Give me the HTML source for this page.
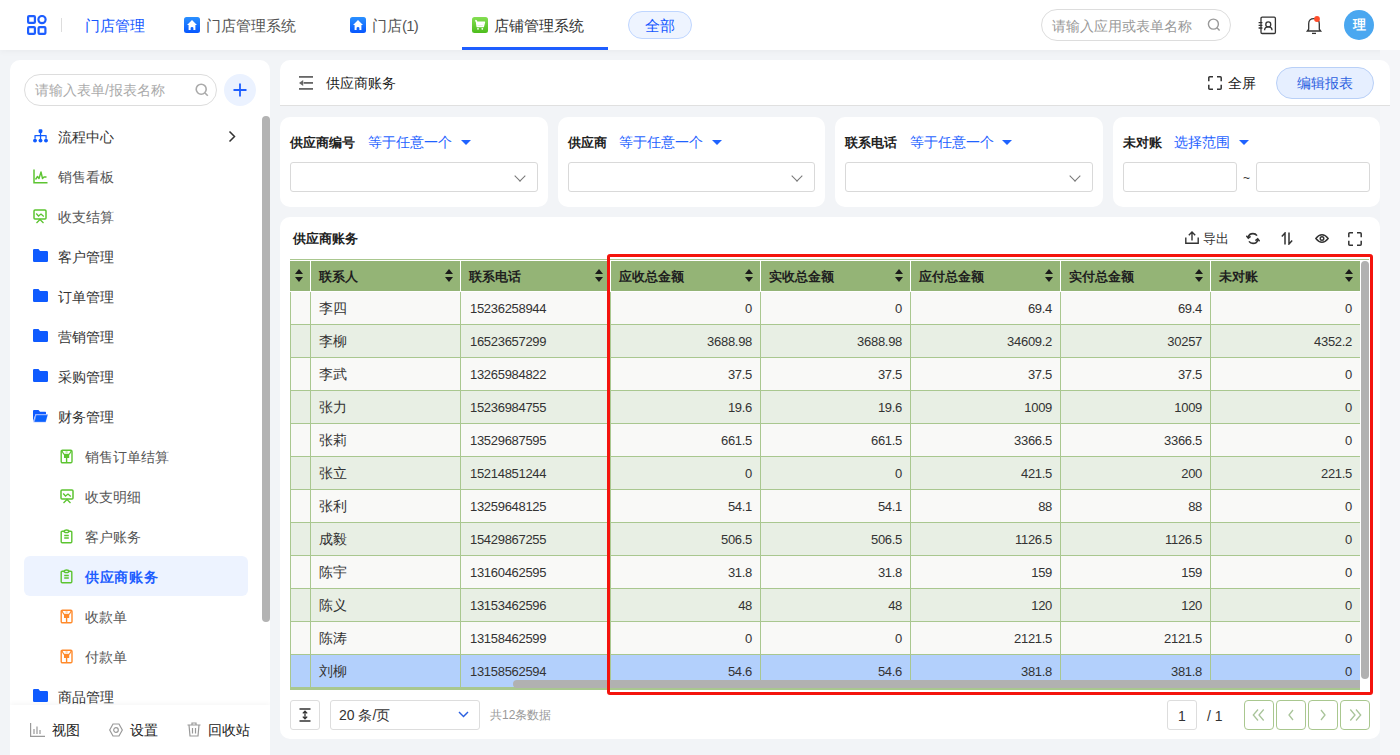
<!DOCTYPE html>
<html><head><meta charset="utf-8">
<style>
*{box-sizing:border-box;margin:0;padding:0}
html,body{width:1400px;height:755px;overflow:hidden}
body{font-family:"Liberation Sans",sans-serif;background:#f2f4f7;position:relative;color:#333}
.abs{position:absolute}
.topbar{left:0;top:0;width:1400px;height:50px;background:#fff;box-shadow:0 2px 6px rgba(0,0,0,.035)}
.tb-txt{position:absolute;font-size:15px;line-height:20px;top:16px;color:#555;white-space:nowrap}
.side{left:10px;top:60px;width:260px;height:720px;background:#fff;border-radius:10px;overflow:hidden}
.mi{position:absolute;left:0;width:260px;height:40px;font-size:14px;line-height:40px;color:#333}
.mi .t{position:absolute;left:48px;top:0}
.mi .ic{position:absolute;left:23px;top:13px;width:15px;height:14px}
.sub .t{left:75px;color:#555}
.sub .ic{left:50px}
.card{background:#fff;border-radius:10px;position:absolute}
.flabel{position:absolute;top:18px;font-size:13px;font-weight:bold;color:#222;line-height:16px;white-space:nowrap}
.fop{position:absolute;top:16px;font-size:14px;color:#1f63ff;line-height:18px;white-space:nowrap}
.tri{position:absolute;top:23px;width:0;height:0;border-left:5px solid transparent;border-right:5px solid transparent;border-top:5px solid #1f63ff}
.sel{position:absolute;top:45px;height:30px;border:1px solid #d9d9d9;border-radius:3px;background:#fff}
.th{font-size:13px;font-weight:bold;line-height:18px;color:#1f1f1f;white-space:nowrap}
.td{font-size:14px;line-height:18px;color:#333;white-space:nowrap}
.num{font-size:13px;letter-spacing:-0.3px}
.pg{width:30px;height:30px;border:1.3px solid #a9c78f;border-radius:4px;display:flex;align-items:center;justify-content:center}
.chev{position:absolute;right:13px;top:9px;width:8px;height:8px;border-right:1.3px solid #777;border-bottom:1.3px solid #777;transform:rotate(45deg)}
</style></head><body>

<!-- TOP BAR -->
<div class="abs topbar">
  <svg class="abs" style="left:27px;top:15px" width="20" height="20" viewBox="0 0 20 20" fill="none" stroke="#1e5eff" stroke-width="2.2">
    <rect x="1.1" y="1.1" width="6.8" height="6.8" rx="1"/><circle cx="15" cy="4.6" r="3.6"/>
    <rect x="1.1" y="12.1" width="6.8" height="6.8" rx="1"/><rect x="11.6" y="12.1" width="6.8" height="6.8" rx="1"/>
  </svg>
  <div class="abs" style="left:61px;top:18px;width:1px;height:14px;background:#ddd"></div>
  <div class="tb-txt" style="left:85px;color:#1458ff">门店管理</div>
  <svg class="abs" style="left:184px;top:17px" width="16" height="16" viewBox="0 0 16 16"><defs><linearGradient id="hb184" x1="0" y1="0" x2="0" y2="1"><stop offset="0" stop-color="#2a90ff"/><stop offset="1" stop-color="#0757ff"/></linearGradient></defs><rect width="16" height="16" rx="2.5" fill="url(#hb184)"/><path d="M8 2.9L13 8.1H11.4V13.1H9.4V10.9Q9.4 10 8 10Q6.6 10 6.6 10.9V13.1H4.6V8.1H3Z" fill="#fff"/></svg>
  <div class="tb-txt" style="left:206px">门店管理系统</div>
  <svg class="abs" style="left:350px;top:17px" width="16" height="16" viewBox="0 0 16 16"><defs><linearGradient id="hb350" x1="0" y1="0" x2="0" y2="1"><stop offset="0" stop-color="#2a90ff"/><stop offset="1" stop-color="#0757ff"/></linearGradient></defs><rect width="16" height="16" rx="2.5" fill="url(#hb350)"/><path d="M8 2.9L13 8.1H11.4V13.1H9.4V10.9Q9.4 10 8 10Q6.6 10 6.6 10.9V13.1H4.6V8.1H3Z" fill="#fff"/></svg>
  <div class="tb-txt" style="left:372px">门店<span style="letter-spacing:-0.8px">(1)</span></div>
  <svg class="abs" style="left:472px;top:17px" width="16" height="16" viewBox="0 0 16 16"><defs><linearGradient id="gb" x1="0" y1="0" x2="0" y2="1"><stop offset="0" stop-color="#84de52"/><stop offset="1" stop-color="#4dbd1c"/></linearGradient></defs><rect width="16" height="16" rx="2.5" fill="url(#gb)"/><path d="M3.2 3.5L4.4 4L5.2 9.6H11.3L12.4 5.2H4.8" fill="none" stroke="#fff" stroke-width="1.5" stroke-linejoin="round"/><path d="M4.6 5H12.2L11.2 8.8H5.3Z" fill="#fff"/><circle cx="6" cy="11.8" r="0.9" fill="#fff"/><circle cx="10.3" cy="11.8" r="0.9" fill="#fff"/></svg>
  <div class="tb-txt" style="left:494px;color:#333">店铺管理系统</div>
  <div class="abs" style="left:462px;top:47px;width:146px;height:3px;background:#1e5eff"></div>
  <div class="abs" style="left:628px;top:11px;width:64px;height:28px;border-radius:14px;background:#eef4ff;border:1px solid #bfd6ff;color:#1458ff;font-size:15px;line-height:28px;text-align:center">全部</div>

  <div class="abs" style="left:1041px;top:9px;width:190px;height:32px;border-radius:16px;border:1px solid #ddd;background:#fff"></div>
  <div class="tb-txt" style="left:1052px;font-size:14px;color:#999">请输入应用或表单名称</div>
  <svg class="abs" style="left:1207px;top:18px" width="14" height="14" viewBox="0 0 14 14" fill="none" stroke="#999" stroke-width="1.4"><circle cx="6.4" cy="6.1" r="5"/><path d="M10 9.8L12.6 12.4"/></svg>
  <svg class="abs" style="left:1258px;top:16px" width="20" height="19" viewBox="0 0 20 19" fill="none" stroke="#333" stroke-width="1.3"><rect x="3" y="1.2" width="14.4" height="16.3" rx="1.2"/><path d="M0.6 6.6H4.4M0.6 9.3H4.4M0.6 12H4.4"/><circle cx="10.3" cy="8.4" r="2.5"/><path d="M6.6 14.2Q6.6 10.9 10.3 10.9Q14 10.9 14 14.2"/></svg>
  <svg class="abs" style="left:1305px;top:15px" width="20" height="20" viewBox="0 0 20 20" fill="none" stroke="#333" stroke-width="1.3"><path d="M2.3 16H15.7L14.3 14.2V8.8Q14.3 3.6 9 3.6Q3.7 3.6 3.7 8.8V14.2Z"/><path d="M7 18.4H11"/><circle cx="12" cy="4" r="2.9" fill="#ff4d2a" stroke="none"/></svg>
  <div class="abs" style="left:1344px;top:10px;width:30px;height:30px;border-radius:50%;background:#4aa7f0;color:#fff;font-size:13px;line-height:30px;text-align:center;font-weight:bold">理</div>
</div>

<!-- SIDEBAR -->
<div class="abs side">
  <div class="abs" style="left:14px;top:14px;width:193px;height:32px;border-radius:16px;border:1px solid #ddd"></div>
  <div class="abs" style="left:25px;top:21px;font-size:14px;line-height:18px;color:#aaa">请输入表单/报表名称</div>
  <svg class="abs" style="left:185px;top:23px" width="14" height="14" viewBox="0 0 14 14" fill="none" stroke="#aaa" stroke-width="1.6"><circle cx="6.2" cy="6.2" r="5"/><path d="M10 10L12.8 12.8"/></svg>
  <div class="abs" style="left:214px;top:14px;width:32px;height:32px;border-radius:50%;background:#ebf2ff"></div>
  <svg class="abs" style="left:222px;top:22px" width="16" height="16" viewBox="0 0 16 16" stroke="#1e5eff" stroke-width="1.8"><path d="M8 1.5V14.5M1.5 8H14.5"/></svg>
  <!--MENU-->
<div class="mi" style="top:57px"><svg class="abs" style="left:23px;top:12px" width="15" height="15" viewBox="0 0 15 15" fill="#0f5bff"><rect x="5.6" y="0.3" width="3.8" height="3.6" rx="1.2"/><rect x="6.9" y="3" width="1.3" height="7"/><rect x="2" y="5.9" width="11" height="1.4" rx="0.6"/><rect x="1.4" y="6.2" width="1.3" height="3.5"/><rect x="12.4" y="6.2" width="1.3" height="3.5"/><circle cx="2" cy="11.6" r="1.95"/><circle cx="7.5" cy="11.6" r="1.95"/><circle cx="13" cy="11.6" r="1.95"/></svg><div class="t" style="left:48px;color:#333">流程中心</div></div>
<svg class="abs" style="left:218px;top:70px" width="8" height="13" viewBox="0 0 8 13" fill="none" stroke="#333" stroke-width="1.5"><path d="M1.5 1.5L6.5 6.5L1.5 11.5"/></svg>
<div class="mi" style="top:97px"><svg class="abs" style="left:23px;top:12px" width="15" height="15" viewBox="0 0 15 15" fill="none" stroke="#5cc431" stroke-width="1.5"><path d="M1 0.5V13.8H14.5"/><path d="M2.5 10.5L4.5 7.5L6 9.5L8 3L9.5 9.5L11 8H13.5" stroke-width="1.4" stroke-linejoin="round"/></svg><div class="t" style="left:48px;color:#555">销售看板</div></div>
<div class="mi" style="top:137px"><svg class="abs" style="left:23px;top:12px" width="14" height="15" viewBox="0 0 14 15" fill="none" stroke="#5cc431" stroke-width="1.5"><rect x="1" y="1" width="12" height="9" rx="1"/><path d="M3.2 4.5L5.5 7L8 5L10.8 7.5" stroke-width="1.3"/><path d="M3.5 14L7 10.5L10.5 14" stroke-width="1.3"/></svg><div class="t" style="left:48px;color:#555">收支结算</div></div>
<div class="mi" style="top:177px"><svg class="abs" style="left:23px;top:12px" width="15" height="13" viewBox="0 0 15 13"><path d="M0 1.2Q0 0 1.2 0H5.5L7 2H13.8Q15 2 15 3.2V11.8Q15 13 13.8 13H1.2Q0 13 0 11.8Z" fill="#0f5bff"/></svg><div class="t" style="left:48px;color:#333">客户管理</div></div>
<div class="mi" style="top:217px"><svg class="abs" style="left:23px;top:12px" width="15" height="13" viewBox="0 0 15 13"><path d="M0 1.2Q0 0 1.2 0H5.5L7 2H13.8Q15 2 15 3.2V11.8Q15 13 13.8 13H1.2Q0 13 0 11.8Z" fill="#0f5bff"/></svg><div class="t" style="left:48px;color:#333">订单管理</div></div>
<div class="mi" style="top:257px"><svg class="abs" style="left:23px;top:12px" width="15" height="13" viewBox="0 0 15 13"><path d="M0 1.2Q0 0 1.2 0H5.5L7 2H13.8Q15 2 15 3.2V11.8Q15 13 13.8 13H1.2Q0 13 0 11.8Z" fill="#0f5bff"/></svg><div class="t" style="left:48px;color:#333">营销管理</div></div>
<div class="mi" style="top:297px"><svg class="abs" style="left:23px;top:12px" width="15" height="13" viewBox="0 0 15 13"><path d="M0 1.2Q0 0 1.2 0H5.5L7 2H13.8Q15 2 15 3.2V11.8Q15 13 13.8 13H1.2Q0 13 0 11.8Z" fill="#0f5bff"/></svg><div class="t" style="left:48px;color:#333">采购管理</div></div>
<div class="mi" style="top:337px"><svg class="abs" style="left:23px;top:13px" width="15" height="13" viewBox="0 0 15 13"><path d="M0 1Q0 0 1 0H5.5L7 1.8H12.3Q13 1.8 13 2.5V4.2H2.4L0 11.5Z" fill="#0f5bff"/><path d="M2.6 4.3H15L12.8 12.3H0.4Z" fill="#8aa8ff"/><path d="M3.4 5.2H14.4L12.5 11.8H1.7Z" fill="#0a62ff"/></svg><div class="t" style="left:48px;color:#333">财务管理</div></div>
<div class="mi" style="top:377px"><svg class="abs" style="left:50px;top:12px" width="13" height="15" viewBox="0 0 13 15"><rect x="1.2" y="1.2" width="10.8" height="12.6" rx="1.2" fill="none" stroke="#5cc431" stroke-width="1.4"/><path d="M1.8 1.8L4 5.5M11.4 1.8L9.2 5.5" stroke="#5cc431" stroke-width="1.2"/><rect x="4" y="4.8" width="5.2" height="4.2" fill="#5cc431"/><rect x="5.9" y="8.5" width="1.4" height="5" fill="#5cc431"/><rect x="5.4" y="2.6" width="2.4" height="0.9" rx="0.4" fill="#5cc431" opacity=".7"/></svg><div class="t" style="left:75px;color:#555">销售订单结算</div></div>
<div class="mi" style="top:417px"><svg class="abs" style="left:50px;top:12px" width="14" height="15" viewBox="0 0 14 15" fill="none" stroke="#5cc431" stroke-width="1.5"><rect x="1" y="1" width="12" height="9" rx="1"/><path d="M3.2 4.5L5.5 7L8 5L10.8 7.5" stroke-width="1.3"/><path d="M3.5 14L7 10.5L10.5 14" stroke-width="1.3"/></svg><div class="t" style="left:75px;color:#555">收支明细</div></div>
<div class="mi" style="top:457px"><svg class="abs" style="left:50px;top:12px" width="13" height="15" viewBox="0 0 13 15" fill="none" stroke="#5cc431" stroke-width="1.4"><path d="M4 2.3H2.2Q1.2 2.3 1.2 3.3V12.8Q1.2 13.8 2.2 13.8H10.8Q11.8 13.8 11.8 12.8V3.3Q11.8 2.3 10.8 2.3H9"/><ellipse cx="6.5" cy="2.3" rx="2.4" ry="1.3"/><path d="M4.2 6.5H8.8M4.2 9H8.8" stroke-width="1.3"/></svg><div class="t" style="left:75px;color:#555">客户账务</div></div>
<div class="abs" style="left:14px;top:496px;width:224px;height:40px;border-radius:6px;background:#edf3ff"></div>
<div class="mi" style="top:497px"><svg class="abs" style="left:50px;top:12px" width="13" height="15" viewBox="0 0 13 15" fill="none" stroke="#5cc431" stroke-width="1.4"><path d="M4 2.3H2.2Q1.2 2.3 1.2 3.3V12.8Q1.2 13.8 2.2 13.8H10.8Q11.8 13.8 11.8 12.8V3.3Q11.8 2.3 10.8 2.3H9"/><ellipse cx="6.5" cy="2.3" rx="2.4" ry="1.3"/><path d="M4.2 6.5H8.8M4.2 9H8.8" stroke-width="1.3"/></svg><div class="t" style="left:75px;color:#1e5eff;font-weight:bold;letter-spacing:0.7px">供应商账务</div></div>
<div class="mi" style="top:537px"><svg class="abs" style="left:50px;top:12px" width="13" height="15" viewBox="0 0 13 15"><rect x="1.2" y="1.2" width="10.8" height="12.6" rx="1.2" fill="none" stroke="#ff8a2b" stroke-width="1.4"/><path d="M1.8 1.8L4 5.5M11.4 1.8L9.2 5.5" stroke="#ff8a2b" stroke-width="1.2"/><rect x="4" y="4.8" width="5.2" height="4.2" fill="#ff8a2b"/><rect x="5.9" y="8.5" width="1.4" height="5" fill="#ff8a2b"/><rect x="5.4" y="2.6" width="2.4" height="0.9" rx="0.4" fill="#ff8a2b" opacity=".7"/></svg><div class="t" style="left:75px;color:#555">收款单</div></div>
<div class="mi" style="top:577px"><svg class="abs" style="left:50px;top:12px" width="13" height="15" viewBox="0 0 13 15"><rect x="1.2" y="1.2" width="10.8" height="12.6" rx="1.2" fill="none" stroke="#ff8a2b" stroke-width="1.4"/><path d="M1.8 1.8L4 5.5M11.4 1.8L9.2 5.5" stroke="#ff8a2b" stroke-width="1.2"/><rect x="4" y="4.8" width="5.2" height="4.2" fill="#ff8a2b"/><rect x="5.9" y="8.5" width="1.4" height="5" fill="#ff8a2b"/><rect x="5.4" y="2.6" width="2.4" height="0.9" rx="0.4" fill="#ff8a2b" opacity=".7"/></svg><div class="t" style="left:75px;color:#555">付款单</div></div>
<div class="mi" style="top:617px"><svg class="abs" style="left:23px;top:12px" width="15" height="13" viewBox="0 0 15 13"><path d="M0 1.2Q0 0 1.2 0H5.5L7 2H13.8Q15 2 15 3.2V11.8Q15 13 13.8 13H1.2Q0 13 0 11.8Z" fill="#0f5bff"/></svg><div class="t" style="left:48px;color:#333">商品管理</div></div>
<!--/MENU-->
  <div class="abs" style="left:252px;top:56px;width:8px;height:506px;border-radius:4px;background:#b3b3b3"></div>
  
  <div class="abs" style="left:0;top:645px;width:260px;height:80px;background:#fff;box-shadow:0 -2px 5px rgba(0,0,0,.035)"></div>
  <!--BOTTOM-->
<svg class="abs" style="left:20px;top:663px" width="15" height="14" viewBox="0 0 15 14" fill="none" stroke="#999" stroke-width="1.2"><path d="M0.6 0V13.4H15M4 11V6M7 11V3.5M10 11V7"/></svg>
<div class="abs" style="left:42px;top:661px;font-size:14px;line-height:18px;color:#222">视图</div>
<svg class="abs" style="left:99px;top:663px" width="14" height="14" viewBox="0 0 14 14" fill="none" stroke="#999" stroke-width="1.2"><path d="M4 1H10L13.3 7L10 13H4L0.7 7Z"/><circle cx="7" cy="7" r="2.3"/></svg>
<div class="abs" style="left:120px;top:661px;font-size:14px;line-height:18px;color:#222">设置</div>
<svg class="abs" style="left:177px;top:662px" width="14" height="15" viewBox="0 0 14 15" fill="none" stroke="#999" stroke-width="1.2"><path d="M0.5 3H13.5M5 3V1H9V3M2 3L3 14H11L12 3M5.5 6V11.5M8.5 6V11.5"/></svg>
<div class="abs" style="left:198px;top:661px;font-size:14px;line-height:18px;color:#222">回收站</div>
<!--/BOTTOM-->
</div>

<!-- MAIN HEADER -->
<div class="abs" style="left:1380px;top:50px;width:20px;height:705px;background:#f5f6f9"></div>
<div class="abs" style="left:280px;top:60px;width:1110px;height:46px;background:#fff;border-radius:10px 10px 0 0;border-bottom:1px solid #e0e0e0"></div>
<div class="abs" style="left:326px;top:74px;font-size:14px;line-height:18px;color:#222">供应商账务</div>
<svg class="abs" style="left:299px;top:76px" width="14" height="14" viewBox="0 0 14 14" fill="#666"><rect x="0" y="0" width="14" height="1.8"/><rect x="4.6" y="6" width="9.4" height="1.8"/><path d="M0 6.9L4.2 3.9V9.9Z"/><rect x="0" y="12" width="14" height="1.8"/></svg>
<svg class="abs" style="left:1208px;top:76px" width="14" height="14" viewBox="0 0 14 14" fill="none" stroke="#333" stroke-width="1.5"><path d="M0.8 5.3V1.8Q0.8 0.8 1.8 0.8H5M9 0.8H12.2Q13.2 0.8 13.2 1.8V5.3M13.2 8.7V12.2Q13.2 13.2 12.2 13.2H9M5 13.2H1.8Q0.8 13.2 0.8 12.2V8.7"/></svg>
<div class="abs" style="left:1228px;top:74px;font-size:14px;line-height:18px;color:#222">全屏</div>
<div class="abs" style="left:1276px;top:67px;width:98px;height:32px;border-radius:16px;background:#e6efff;border:1px solid #b9d0f7;color:#2b60e0;font-size:14px;line-height:30px;text-align:center">编辑报表</div>

<!-- FILTERS -->
<div class="card" style="left:280px;top:117px;width:268px;height:90px">
  <div class="flabel" style="left:10px">供应商编号</div>
  <div class="fop" style="left:88px">等于任意一个</div>
  <div class="tri" style="left:181px"></div>
  <div class="sel" style="left:10px;width:248px"><div class="chev"></div></div>
</div>
<div class="card" style="left:558px;top:117px;width:267px;height:90px">
  <div class="flabel" style="left:10px">供应商</div>
  <div class="fop" style="left:61px">等于任意一个</div>
  <div class="tri" style="left:154px"></div>
  <div class="sel" style="left:10px;width:247px"><div class="chev"></div></div>
</div>
<div class="card" style="left:835px;top:117px;width:268px;height:90px">
  <div class="flabel" style="left:10px">联系电话</div>
  <div class="fop" style="left:75px">等于任意一个</div>
  <div class="tri" style="left:167px"></div>
  <div class="sel" style="left:10px;width:248px"><div class="chev"></div></div>
</div>
<div class="card" style="left:1113px;top:117px;width:267px;height:90px">
  <div class="flabel" style="left:10px">未对账</div>
  <div class="fop" style="left:61px">选择范围</div>
  <div class="tri" style="left:126px"></div>
  <div class="sel" style="left:10px;width:114px"></div>
  <div class="abs" style="left:130px;top:54px;font-size:12px;color:#333">~</div>
  <div class="sel" style="left:143px;width:114px"></div>
</div>

<!-- TABLE CARD -->
<div class="card" style="left:280px;top:217px;width:1100px;height:522px">
  <div class="abs" style="left:13px;top:13px;font-size:13px;font-weight:bold;line-height:17px;color:#222">供应商账务</div>
  <svg class="abs" style="left:905px;top:14px" width="14" height="13" viewBox="0 0 14 13" fill="none" stroke="#333" stroke-width="1.4"><path d="M0.8 6.5V12.2H13.2V6.5"/><path d="M7 9.5V1.2M3.8 4.2L7 1L10.2 4.2"/></svg>
  <div class="abs" style="left:923px;top:13px;font-size:13px;line-height:17px;color:#333">导出</div>
  <svg class="abs" style="left:966px;top:15px" width="14" height="13" viewBox="0 0 14 13" fill="none" stroke="#333" stroke-width="1.6"><path d="M2.2 5.2Q3 1.6 7 1.6Q9.6 1.6 11 3.6"/><path d="M11.8 7.8Q11 11.4 7 11.4Q4.4 11.4 3 9.4"/><path d="M0.4 3.8L2.3 6.2L4.6 4.4" stroke-width="1.5"/><path d="M13.6 9.2L11.7 6.8L9.4 8.6" stroke-width="1.5"/></svg>
  <svg class="abs" style="left:1001px;top:15px" width="12" height="13" viewBox="0 0 12 13" fill="none" stroke="#333" stroke-width="1.5"><path d="M4 12.5V1L0.8 4.4"/><path d="M8 0.5V12L11.2 8.6"/></svg>
  <svg class="abs" style="left:1035px;top:17px" width="14" height="9" viewBox="0 0 14 9" fill="none" stroke="#333" stroke-width="1.4"><path d="M0.8 4.5Q3.8 0.8 7 0.8Q10.2 0.8 13.2 4.5Q10.2 8.2 7 8.2Q3.8 8.2 0.8 4.5Z"/><circle cx="7" cy="4.5" r="1.8"/></svg>
  <svg class="abs" style="left:1068px;top:15px" width="14" height="14" viewBox="0 0 14 14" fill="none" stroke="#333" stroke-width="1.5"><path d="M0.8 5.3V1.8Q0.8 0.8 1.8 0.8H5M9 0.8H12.2Q13.2 0.8 13.2 1.8V5.3M13.2 8.7V12.2Q13.2 13.2 12.2 13.2H9M5 13.2H1.8Q0.8 13.2 0.8 12.2V8.7"/></svg>
  <div class="abs" style="left:10px;top:483px;width:30px;height:30px;border:1px solid #ddd;border-radius:3px"></div>
  <svg class="abs" style="left:18px;top:491px" width="14" height="14" viewBox="0 0 14 14" fill="none" stroke="#333" stroke-width="1.3"><path d="M1.5 1H12.5M1.5 13H12.5"/><path d="M7 3.2V10.8M4.8 5.4L7 3.2L9.2 5.4M4.8 8.6L7 10.8L9.2 8.6"/></svg>
  <div class="abs" style="left:50px;top:483px;width:150px;height:30px;border:1px solid #ddd;border-radius:3px"></div>
  <div class="abs" style="left:59px;top:489px;font-size:14px;line-height:18px;color:#333">20 条/页</div>
  <svg class="abs" style="left:178px;top:494px" width="11" height="7" viewBox="0 0 11 7" fill="none" stroke="#2b60e0" stroke-width="1.4"><path d="M1 1L5.5 5.6L10 1"/></svg>
  <div class="abs" style="left:210px;top:490px;font-size:12px;line-height:17px;color:#999">共12条数据</div>
  <div class="abs" style="left:887px;top:483px;width:30px;height:30px;border:1px solid #ddd;border-radius:3px;text-align:center;font-size:14px;line-height:30px;color:#333">1</div>
  <div class="abs" style="left:927px;top:490px;font-size:14px;line-height:18px;color:#333">/ 1</div>
  <div class="abs pg" style="left:964px;top:483px"><svg width="16" height="16" viewBox="0 0 16 16" fill="none" stroke="#a9c49a" stroke-width="1.3"><path d="M7 2.5L2.3 8L7 13.5M12.7 2.5L8 8L12.7 13.5"/></svg></div>
  <div class="abs pg" style="left:996px;top:483px"><svg width="10" height="16" viewBox="0 0 10 16" fill="none" stroke="#a9c49a" stroke-width="1.3"><path d="M7 3L3 8L7 13"/></svg></div>
  <div class="abs pg" style="left:1028px;top:483px"><svg width="10" height="16" viewBox="0 0 10 16" fill="none" stroke="#a9c49a" stroke-width="1.3"><path d="M3 3L7 8L3 13"/></svg></div>
  <div class="abs pg" style="left:1060px;top:483px"><svg width="16" height="16" viewBox="0 0 16 16" fill="none" stroke="#a9c49a" stroke-width="1.3"><path d="M3.3 2.5L8 8L3.3 13.5M9 2.5L13.7 8L9 13.5"/></svg></div>
</div>

<!--TABLE-->
<div class="abs" style="left:290px;top:259px;width:1079px;height:1px;background:#a9c78f"></div>
<div class="abs" style="left:290px;top:260px;width:1070px;height:32px;background:#fff"></div>
<div class="abs" style="left:290px;top:261px;width:20px;height:30px;background:#94b476"></div>
<svg class="abs" style="left:295px;top:269px" width="8" height="13" viewBox="0 0 8 13"><path d="M4 0L8 5H0Z M0 8H8L4 13Z" fill="#1a1a1a"/></svg>
<div class="abs" style="left:311px;top:261px;width:149px;height:30px;background:#94b476"></div>
<svg class="abs" style="left:445px;top:269px" width="8" height="13" viewBox="0 0 8 13"><path d="M4 0L8 5H0Z M0 8H8L4 13Z" fill="#1a1a1a"/></svg>
<div class="abs th" style="left:319px;top:268px">联系人</div>
<div class="abs" style="left:461px;top:261px;width:149px;height:30px;background:#94b476"></div>
<svg class="abs" style="left:595px;top:269px" width="8" height="13" viewBox="0 0 8 13"><path d="M4 0L8 5H0Z M0 8H8L4 13Z" fill="#1a1a1a"/></svg>
<div class="abs th" style="left:469px;top:268px">联系电话</div>
<div class="abs" style="left:611px;top:261px;width:149px;height:30px;background:#94b476"></div>
<svg class="abs" style="left:745px;top:269px" width="8" height="13" viewBox="0 0 8 13"><path d="M4 0L8 5H0Z M0 8H8L4 13Z" fill="#1a1a1a"/></svg>
<div class="abs th" style="left:619px;top:268px">应收总金额</div>
<div class="abs" style="left:761px;top:261px;width:149px;height:30px;background:#94b476"></div>
<svg class="abs" style="left:895px;top:269px" width="8" height="13" viewBox="0 0 8 13"><path d="M4 0L8 5H0Z M0 8H8L4 13Z" fill="#1a1a1a"/></svg>
<div class="abs th" style="left:769px;top:268px">实收总金额</div>
<div class="abs" style="left:911px;top:261px;width:149px;height:30px;background:#94b476"></div>
<svg class="abs" style="left:1045px;top:269px" width="8" height="13" viewBox="0 0 8 13"><path d="M4 0L8 5H0Z M0 8H8L4 13Z" fill="#1a1a1a"/></svg>
<div class="abs th" style="left:919px;top:268px">应付总金额</div>
<div class="abs" style="left:1061px;top:261px;width:149px;height:30px;background:#94b476"></div>
<svg class="abs" style="left:1195px;top:269px" width="8" height="13" viewBox="0 0 8 13"><path d="M4 0L8 5H0Z M0 8H8L4 13Z" fill="#1a1a1a"/></svg>
<div class="abs th" style="left:1069px;top:268px">实付总金额</div>
<div class="abs" style="left:1211px;top:261px;width:149px;height:30px;background:#94b476"></div>
<svg class="abs" style="left:1345px;top:269px" width="8" height="13" viewBox="0 0 8 13"><path d="M4 0L8 5H0Z M0 8H8L4 13Z" fill="#1a1a1a"/></svg>
<div class="abs th" style="left:1219px;top:268px">未对账</div>
<div class="abs" style="left:291px;top:292px;width:1069px;height:32px;background:#f9f9f7"></div>
<div class="abs" style="left:290px;top:324px;width:1070px;height:1px;background:#a9c78f"></div>
<div class="abs td" style="left:319px;top:299px">李四</div>
<div class="abs td num" style="left:470px;top:300px">15236258944</div>
<div class="abs td num" style="left:610px;width:142px;text-align:right;top:300px">0</div>
<div class="abs td num" style="left:760px;width:142px;text-align:right;top:300px">0</div>
<div class="abs td num" style="left:910px;width:142px;text-align:right;top:300px">69.4</div>
<div class="abs td num" style="left:1060px;width:142px;text-align:right;top:300px">69.4</div>
<div class="abs td num" style="left:1210px;width:142px;text-align:right;top:300px">0</div>
<div class="abs" style="left:291px;top:325px;width:1069px;height:32px;background:#e8efe4"></div>
<div class="abs" style="left:290px;top:357px;width:1070px;height:1px;background:#a9c78f"></div>
<div class="abs td" style="left:319px;top:332px">李柳</div>
<div class="abs td num" style="left:470px;top:333px">16523657299</div>
<div class="abs td num" style="left:610px;width:142px;text-align:right;top:333px">3688.98</div>
<div class="abs td num" style="left:760px;width:142px;text-align:right;top:333px">3688.98</div>
<div class="abs td num" style="left:910px;width:142px;text-align:right;top:333px">34609.2</div>
<div class="abs td num" style="left:1060px;width:142px;text-align:right;top:333px">30257</div>
<div class="abs td num" style="left:1210px;width:142px;text-align:right;top:333px">4352.2</div>
<div class="abs" style="left:291px;top:358px;width:1069px;height:32px;background:#f9f9f7"></div>
<div class="abs" style="left:290px;top:390px;width:1070px;height:1px;background:#a9c78f"></div>
<div class="abs td" style="left:319px;top:365px">李武</div>
<div class="abs td num" style="left:470px;top:366px">13265984822</div>
<div class="abs td num" style="left:610px;width:142px;text-align:right;top:366px">37.5</div>
<div class="abs td num" style="left:760px;width:142px;text-align:right;top:366px">37.5</div>
<div class="abs td num" style="left:910px;width:142px;text-align:right;top:366px">37.5</div>
<div class="abs td num" style="left:1060px;width:142px;text-align:right;top:366px">37.5</div>
<div class="abs td num" style="left:1210px;width:142px;text-align:right;top:366px">0</div>
<div class="abs" style="left:291px;top:391px;width:1069px;height:32px;background:#e8efe4"></div>
<div class="abs" style="left:290px;top:423px;width:1070px;height:1px;background:#a9c78f"></div>
<div class="abs td" style="left:319px;top:398px">张力</div>
<div class="abs td num" style="left:470px;top:399px">15236984755</div>
<div class="abs td num" style="left:610px;width:142px;text-align:right;top:399px">19.6</div>
<div class="abs td num" style="left:760px;width:142px;text-align:right;top:399px">19.6</div>
<div class="abs td num" style="left:910px;width:142px;text-align:right;top:399px">1009</div>
<div class="abs td num" style="left:1060px;width:142px;text-align:right;top:399px">1009</div>
<div class="abs td num" style="left:1210px;width:142px;text-align:right;top:399px">0</div>
<div class="abs" style="left:291px;top:424px;width:1069px;height:32px;background:#f9f9f7"></div>
<div class="abs" style="left:290px;top:456px;width:1070px;height:1px;background:#a9c78f"></div>
<div class="abs td" style="left:319px;top:431px">张莉</div>
<div class="abs td num" style="left:470px;top:432px">13529687595</div>
<div class="abs td num" style="left:610px;width:142px;text-align:right;top:432px">661.5</div>
<div class="abs td num" style="left:760px;width:142px;text-align:right;top:432px">661.5</div>
<div class="abs td num" style="left:910px;width:142px;text-align:right;top:432px">3366.5</div>
<div class="abs td num" style="left:1060px;width:142px;text-align:right;top:432px">3366.5</div>
<div class="abs td num" style="left:1210px;width:142px;text-align:right;top:432px">0</div>
<div class="abs" style="left:291px;top:457px;width:1069px;height:32px;background:#e8efe4"></div>
<div class="abs" style="left:290px;top:489px;width:1070px;height:1px;background:#a9c78f"></div>
<div class="abs td" style="left:319px;top:464px">张立</div>
<div class="abs td num" style="left:470px;top:465px">15214851244</div>
<div class="abs td num" style="left:610px;width:142px;text-align:right;top:465px">0</div>
<div class="abs td num" style="left:760px;width:142px;text-align:right;top:465px">0</div>
<div class="abs td num" style="left:910px;width:142px;text-align:right;top:465px">421.5</div>
<div class="abs td num" style="left:1060px;width:142px;text-align:right;top:465px">200</div>
<div class="abs td num" style="left:1210px;width:142px;text-align:right;top:465px">221.5</div>
<div class="abs" style="left:291px;top:490px;width:1069px;height:32px;background:#f9f9f7"></div>
<div class="abs" style="left:290px;top:522px;width:1070px;height:1px;background:#a9c78f"></div>
<div class="abs td" style="left:319px;top:497px">张利</div>
<div class="abs td num" style="left:470px;top:498px">13259648125</div>
<div class="abs td num" style="left:610px;width:142px;text-align:right;top:498px">54.1</div>
<div class="abs td num" style="left:760px;width:142px;text-align:right;top:498px">54.1</div>
<div class="abs td num" style="left:910px;width:142px;text-align:right;top:498px">88</div>
<div class="abs td num" style="left:1060px;width:142px;text-align:right;top:498px">88</div>
<div class="abs td num" style="left:1210px;width:142px;text-align:right;top:498px">0</div>
<div class="abs" style="left:291px;top:523px;width:1069px;height:32px;background:#e8efe4"></div>
<div class="abs" style="left:290px;top:555px;width:1070px;height:1px;background:#a9c78f"></div>
<div class="abs td" style="left:319px;top:530px">成毅</div>
<div class="abs td num" style="left:470px;top:531px">15429867255</div>
<div class="abs td num" style="left:610px;width:142px;text-align:right;top:531px">506.5</div>
<div class="abs td num" style="left:760px;width:142px;text-align:right;top:531px">506.5</div>
<div class="abs td num" style="left:910px;width:142px;text-align:right;top:531px">1126.5</div>
<div class="abs td num" style="left:1060px;width:142px;text-align:right;top:531px">1126.5</div>
<div class="abs td num" style="left:1210px;width:142px;text-align:right;top:531px">0</div>
<div class="abs" style="left:291px;top:556px;width:1069px;height:32px;background:#f9f9f7"></div>
<div class="abs" style="left:290px;top:588px;width:1070px;height:1px;background:#a9c78f"></div>
<div class="abs td" style="left:319px;top:563px">陈宇</div>
<div class="abs td num" style="left:470px;top:564px">13160462595</div>
<div class="abs td num" style="left:610px;width:142px;text-align:right;top:564px">31.8</div>
<div class="abs td num" style="left:760px;width:142px;text-align:right;top:564px">31.8</div>
<div class="abs td num" style="left:910px;width:142px;text-align:right;top:564px">159</div>
<div class="abs td num" style="left:1060px;width:142px;text-align:right;top:564px">159</div>
<div class="abs td num" style="left:1210px;width:142px;text-align:right;top:564px">0</div>
<div class="abs" style="left:291px;top:589px;width:1069px;height:32px;background:#e8efe4"></div>
<div class="abs" style="left:290px;top:621px;width:1070px;height:1px;background:#a9c78f"></div>
<div class="abs td" style="left:319px;top:596px">陈义</div>
<div class="abs td num" style="left:470px;top:597px">13153462596</div>
<div class="abs td num" style="left:610px;width:142px;text-align:right;top:597px">48</div>
<div class="abs td num" style="left:760px;width:142px;text-align:right;top:597px">48</div>
<div class="abs td num" style="left:910px;width:142px;text-align:right;top:597px">120</div>
<div class="abs td num" style="left:1060px;width:142px;text-align:right;top:597px">120</div>
<div class="abs td num" style="left:1210px;width:142px;text-align:right;top:597px">0</div>
<div class="abs" style="left:291px;top:622px;width:1069px;height:32px;background:#f9f9f7"></div>
<div class="abs" style="left:290px;top:654px;width:1070px;height:1px;background:#a9c78f"></div>
<div class="abs td" style="left:319px;top:629px">陈涛</div>
<div class="abs td num" style="left:470px;top:630px">13158462599</div>
<div class="abs td num" style="left:610px;width:142px;text-align:right;top:630px">0</div>
<div class="abs td num" style="left:760px;width:142px;text-align:right;top:630px">0</div>
<div class="abs td num" style="left:910px;width:142px;text-align:right;top:630px">2121.5</div>
<div class="abs td num" style="left:1060px;width:142px;text-align:right;top:630px">2121.5</div>
<div class="abs td num" style="left:1210px;width:142px;text-align:right;top:630px">0</div>
<div class="abs" style="left:291px;top:655px;width:1069px;height:32px;background:#b3d0fc"></div>
<div class="abs" style="left:290px;top:687px;width:1070px;height:1px;background:#a9c78f"></div>
<div class="abs td" style="left:319px;top:662px">刘柳</div>
<div class="abs td num" style="left:470px;top:663px">13158562594</div>
<div class="abs td num" style="left:610px;width:142px;text-align:right;top:663px">54.6</div>
<div class="abs td num" style="left:760px;width:142px;text-align:right;top:663px">54.6</div>
<div class="abs td num" style="left:910px;width:142px;text-align:right;top:663px">381.8</div>
<div class="abs td num" style="left:1060px;width:142px;text-align:right;top:663px">381.8</div>
<div class="abs td num" style="left:1210px;width:142px;text-align:right;top:663px">0</div>
<div class="abs" style="left:290px;top:292px;width:1px;height:396px;background:#a9c78f"></div>
<div class="abs" style="left:310px;top:292px;width:1px;height:396px;background:#a9c78f"></div>
<div class="abs" style="left:460px;top:292px;width:1px;height:396px;background:#a9c78f"></div>
<div class="abs" style="left:610px;top:292px;width:1px;height:396px;background:#a9c78f"></div>
<div class="abs" style="left:760px;top:292px;width:1px;height:396px;background:#a9c78f"></div>
<div class="abs" style="left:910px;top:292px;width:1px;height:396px;background:#a9c78f"></div>
<div class="abs" style="left:1060px;top:292px;width:1px;height:396px;background:#a9c78f"></div>
<div class="abs" style="left:1210px;top:292px;width:1px;height:396px;background:#a9c78f"></div>
<div class="abs" style="left:290px;top:687px;width:1070px;height:3px;background:#a9c78f"></div>
<div class="abs" style="left:1360px;top:260px;width:9px;height:428px;background:#fff"></div>
<div class="abs" style="left:1361px;top:261px;width:8px;height:418px;border-radius:4px;background:#b1b1b1"></div>
<div class="abs" style="left:513px;top:680px;width:847px;height:8px;border-radius:4px 0 0 4px;background:#b1b1b1"></div>
<div class="abs" style="left:607px;top:254px;width:766px;height:441px;border:3px solid #f4140d;border-radius:3px"></div>
<!--/TABLE-->
</body></html>
